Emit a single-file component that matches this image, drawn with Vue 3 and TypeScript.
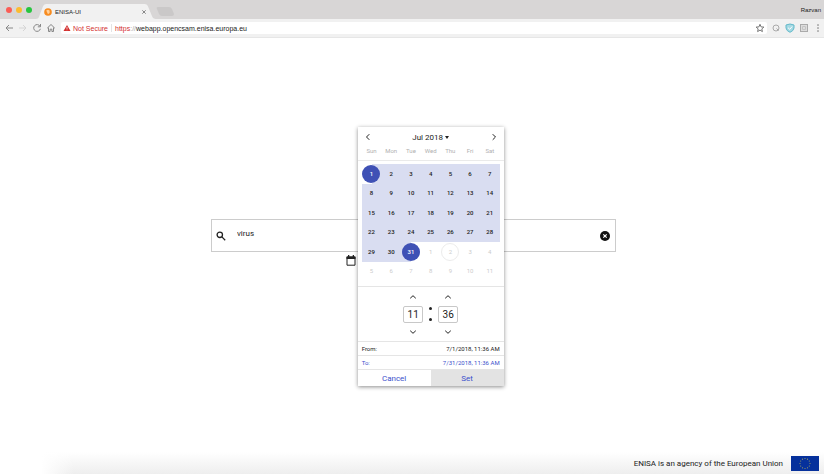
<script setup lang="ts">
import { computed, ref } from 'vue'

interface Day {
  key: number
  label: number
  kind: string[]
}

const query = ref('virus')
const hour = ref('11')
const minute = ref('36')
const weekdays = ['Sun', 'Mon', 'Tue', 'Wed', 'Thu', 'Fri', 'Sat']

const days = computed<Day[]>(() =>
  Array.from({ length: 42 }, (_, i) => {
    const inMonth = i < 31
    const kind: string[] = []
    if (inMonth) kind.push('in-range')
    else kind.push('outside')
    if (i === 0) kind.push('edge', 'start')
    if (i === 30) kind.push('edge', 'end')
    if (i === 32) kind.push('today')
    return { key: i, label: inMonth ? i + 1 : i - 30, kind }
  }),
)

const stars = Array.from({ length: 12 }, (_, i) => ({
  x: 14 + 5 * Math.sin((i * Math.PI) / 6),
  y: 7.5 - 5 * Math.cos((i * Math.PI) / 6),
}))
</script>

<template>
  <div class="window">
    <header class="chrome">
      <div class="tabs">
        <div class="lights"><i class="red"></i><i class="yellow"></i><i class="green"></i></div>
        <div class="tab">
          <svg class="tab-shape" viewBox="0 0 118 15" preserveAspectRatio="none" aria-hidden="true">
            <path d="M0 15C3 15 3 12 4 10L7 2Q8 0 10 0H107Q109 0 110 2L114 12Q115 15 118 15Z" />
          </svg>
          <svg class="favicon" viewBox="0 0 8 8" aria-hidden="true">
            <circle cx="4" cy="4" r="3.8" fill="#f78b1f" />
            <path d="M2.2 2.5 4 1.7 5.6 2.6V5L4 6.2Z" fill="#ffd09a" />
          </svg>
          <span class="tab-title">ENISA-UI</span>
          <button class="tab-close" type="button" aria-label="Close tab">
            <svg viewBox="0 0 6 6"><path d="M1.3 1.3l3.4 3.4M4.7 1.3L1.3 4.7" /></svg>
          </button>
        </div>
        <button class="new-tab" type="button" aria-label="New tab">
          <svg viewBox="0 0 19 9"><path d="M2 0H13Q15 0 16 2L18 7Q18 9 16 9H6Q4 9 3 7L1 2Q0 0 2 0Z" /></svg>
        </button>
        <span class="profile">Razvan</span>
      </div>
      <div class="toolbar">
        <button type="button" aria-label="Back">
          <svg viewBox="0 0 10 10"><path d="M9 5H2M5 2L2 5L5 8" /></svg>
        </button>
        <button type="button" aria-label="Forward" disabled>
          <svg viewBox="0 0 10 10"><path d="M1 5H8M5 2L8 5L5 8" /></svg>
        </button>
        <button type="button" aria-label="Reload">
          <svg viewBox="0 0 10 10"><path d="M8 3.2A3.4 3.4 0 1 0 8.4 5.8M8.5 1V3.8H5.8" /></svg>
        </button>
        <button type="button" aria-label="Home">
          <svg viewBox="0 0 10 10"><path d="M1.2 5.2L5 1.5L8.8 5.2M2.5 4.5V8.5H4.1V6.2H5.9V8.5H7.5V4.5" /></svg>
        </button>
        <div class="address">
          <svg class="warning" viewBox="0 0 8 8" aria-hidden="true">
            <path d="M4 1L7.5 7H.5Z" fill="#d3302f" /><path d="M4 3V5M4 5.5V6.2" stroke="#fff" stroke-width=".7" />
          </svg>
          <span class="insecure">Not Secure</span>
          <span class="divider"></span>
          <span class="url"><span class="scheme">https</span><span class="slashes">://</span>webapp.opencsam.enisa.europa.eu</span>
          <button class="star" type="button" aria-label="Bookmark">
            <svg viewBox="0 0 10 10"><path d="M5 1.3L6.1 3.9L8.9 4.1L6.8 5.9L7.4 8.6L5 7.1L2.6 8.6L3.2 5.9L1.1 4.1L3.9 3.9Z" /></svg>
          </button>
        </div>
        <div class="extensions">
          <button type="button" aria-label="Extension">
            <svg viewBox="0 0 10 10"><circle cx="5" cy="5" r="3" /><path d="M5.5 5.5L7.5 7.5" /></svg>
          </button>
          <button type="button" aria-label="Shield">
            <svg viewBox="0 0 10 10"><path d="M5 1L9 2V5Q8.5 8 5 9.3Q1.5 8 1 5V2Z" fill="#a5d9e3" stroke="#62b9ca" /><path d="M3 4.7L4.7 6.3L7.2 3.5" stroke="#fff" /></svg>
          </button>
          <button type="button" aria-label="Reader">
            <svg viewBox="0 0 10 10"><rect x="1.5" y="1.5" width="7" height="7" fill="#ddd" /><path d="M3.5 3.5H6.5V6.5H3.5Z" stroke="#c4c4c4" /></svg>
          </button>
          <button class="more" type="button" aria-label="Menu">
            <svg viewBox="0 0 10 10"><circle cx="5" cy="2" r=".5" /><circle cx="5" cy="5" r=".5" /><circle cx="5" cy="8" r=".5" /></svg>
          </button>
        </div>
      </div>
    </header>

    <main>
      <form class="search" @submit.prevent>
        <button type="submit" aria-label="Search">
          <svg viewBox="0 0 10 10"><circle cx="3.8" cy="3.8" r="2.7" /><path d="M5.9 5.9L9.2 9.2" /></svg>
        </button>
        <input v-model="query" type="text" aria-label="Search text" />
        <button type="button" aria-label="Clear" @click="query = ''">
          <svg viewBox="0 0 10 10"><circle cx="5" cy="5" r="5" fill="#111" stroke="none" /><path class="clear-cross" d="M3.3 3.3L6.7 6.7M6.7 3.3L3.3 6.7" /></svg>
        </button>
      </form>
      <div class="filters">
        <div class="anchor">
          <button class="calendar-button" type="button" aria-label="Pick dates">
            <svg viewBox="0 0 10 11"><path d="M1 2H9V10.2H1Z" fill="none" stroke="#222" /><path d="M.5 1.5H9.5V4H.5ZM2 0H3.3V2H2ZM6.7 0H8V2H6.7Z" fill="#222" /></svg>
          </button>
          <section class="picker" aria-label="Date range">
            <div class="month">
              <button type="button" aria-label="Previous month"><svg viewBox="0 0 8 8"><path d="M5.3 1.2L2.5 4L5.3 6.8" /></svg></button>
              <button class="month-name" type="button">Jul 2018<i class="caret"></i></button>
              <button type="button" aria-label="Next month"><svg viewBox="0 0 8 8"><path d="M2.7 1.2L5.5 4L2.7 6.8" /></svg></button>
            </div>
            <div class="weekdays"><span v-for="d in weekdays" :key="d">{{ d }}</span></div>
            <div class="days">
              <button v-for="d in days" :key="d.key" type="button" class="day" :class="d.kind"><span>{{ d.label }}</span></button>
            </div>
            <div class="time">
              <div class="unit">
                <button type="button" aria-label="Later hour"><svg viewBox="0 0 8 8"><path d="M1.2 5.3L4 2.7L6.8 5.3" /></svg></button>
                <input v-model="hour" type="text" aria-label="Hour" />
                <button type="button" aria-label="Earlier hour"><svg viewBox="0 0 8 8"><path d="M1.2 2.7L4 5.3L6.8 2.7" /></svg></button>
              </div>
              <div class="colon"><i></i><i></i></div>
              <div class="unit">
                <button type="button" aria-label="Later minute"><svg viewBox="0 0 8 8"><path d="M1.2 5.3L4 2.7L6.8 5.3" /></svg></button>
                <input v-model="minute" type="text" aria-label="Minute" />
                <button type="button" aria-label="Earlier minute"><svg viewBox="0 0 8 8"><path d="M1.2 2.7L4 5.3L6.8 2.7" /></svg></button>
              </div>
            </div>
            <div class="bound"><span>From:</span><span>7/1/2018, 11:36 AM</span></div>
            <div class="bound active"><span>To:</span><span>7/31/2018, 11:36 AM</span></div>
            <div class="actions"><button type="button">Cancel</button><button class="set" type="button">Set</button></div>
          </section>
        </div>
      </div>
    </main>

    <footer>
      <span>ENISA is an agency of the European Union</span>
      <svg class="flag" viewBox="0 0 28 15" role="img" aria-label="European Union flag">
        <rect width="28" height="15" fill="#06319c" />
        <circle v-for="(s, i) in stars" :key="i" :cx="s.x" :cy="s.y" r=".6" fill="#9d9f62" />
      </svg>
    </footer>
  </div>
</template>

<style>
body {
  background: #fff;
}
</style>

<style scoped>
* {
  box-sizing: border-box;
}
.window {
  min-height: 100vh;
  display: flex;
  flex-direction: column;
  font-family: Roboto, "Liberation Sans", sans-serif;
  color: #222;
}
button {
  padding: 0;
  border: 0;
  background: none;
  color: inherit;
  font: inherit;
  display: flex;
  align-items: center;
  justify-content: center;
}
input {
  min-width: 0;
  padding: 0;
  border: 0;
  outline: 0;
  background: none;
  color: inherit;
  font: inherit;
}
svg {
  display: block;
  flex: none;
  fill: none;
  stroke: currentColor;
}
.chrome {
  font-family: "Liberation Sans", sans-serif;
  font-size: 6px;
  background: #f1f1f1;
  border-bottom: 1px solid #e6e6e6;
}
.tabs {
  height: 19px;
  display: flex;
  align-items: flex-end;
  padding: 0 3px 0 6px;
  background: #d8d6d6;
}
.lights {
  display: flex;
  gap: 4px;
  align-self: center;
  margin-right: 4px;
}
.lights i {
  width: 6px;
  height: 6px;
  border-radius: 50%;
}
.red {
  background: #fb5c55;
}
.yellow {
  background: #fcbb2f;
}
.green {
  background: #27c53f;
}
.tab {
  position: relative;
  width: 120px;
  height: 15px;
  display: flex;
  align-items: center;
  gap: 3px;
  padding: 0 9px 0 8px;
}
.tab-shape {
  position: absolute;
  inset: 0;
  width: 100%;
  height: 100%;
  fill: #f1f1f1;
  stroke: none;
}
.favicon,
.tab-title,
.tab-close {
  position: relative;
}
.favicon {
  width: 8px;
  height: 8px;
  stroke: none;
}
.tab-title {
  flex: 1;
}
.tab-close svg {
  width: 6px;
  height: 6px;
  stroke: #888;
}
.new-tab {
  align-self: center;
  padding-top: 4px;
}
.new-tab svg {
  width: 19px;
  height: 9px;
  fill: #cac8c8;
  stroke: none;
}
.profile {
  margin-left: auto;
  align-self: center;
}
.toolbar {
  height: 18px;
  display: flex;
  align-items: center;
  gap: 4px;
  padding: 0 1px 0 4px;
  color: #888;
}
.toolbar button svg {
  width: 10px;
  height: 10px;
}
.toolbar button:disabled {
  color: #d5d5d5;
}
.address {
  flex: 1;
  height: 12px;
  display: flex;
  align-items: center;
  gap: 2px;
  padding: 0 2px;
  margin-left: 1px;
  border-radius: 2px;
  background: #fff;
  font-size: 7px;
  color: #222;
}
.warning {
  width: 8px;
  height: 8px;
  stroke: none;
}
.insecure,
.scheme {
  color: #d3302f;
}
.divider {
  width: 1px;
  height: 8px;
  margin: 0 1px;
  background: #e3e3e3;
}
.slashes {
  color: #aaa;
}
.star {
  margin-left: auto;
  color: #777;
}
.extensions {
  display: flex;
  gap: 4px;
  color: #aaa;
}
.more svg {
  fill: #777;
  stroke: #777;
  stroke-width: 0.5;
}
main {
  flex: 1;
  padding: 181px 25.2% 0 25.6%;
}
.search {
  height: 33px;
  display: flex;
  align-items: center;
  gap: 11px;
  padding: 0 5px 0 4px;
  border: 1px solid #ccc;
}
.search svg {
  width: 10px;
  height: 10px;
  stroke-width: 1.3;
}
.search .clear-cross {
  stroke: #fff;
  stroke-width: 1.2;
}
.search input {
  flex: 1;
  height: 20px;
  padding-bottom: 4px;
  font-size: 8px;
}
.filters {
  display: flex;
  justify-content: center;
  padding-top: 3px;
}
.anchor {
  position: relative;
  margin-right: 126px;
}
.calendar-button svg {
  width: 10px;
  height: 11px;
  stroke: none;
}
.picker {
  position: absolute;
  left: 12px;
  top: -128px;
  width: 146px;
  background: #fff;
  box-shadow: 0 1px 4px rgba(0, 0, 0, 0.45);
  font-size: 6px;
}
.month {
  height: 20px;
  display: flex;
  align-items: center;
  justify-content: space-between;
  padding: 0 6px;
}
.picker svg {
  width: 8px;
  height: 8px;
}
.month-name {
  font-size: 8px;
}
.caret {
  margin-left: 2px;
  border: 2px solid transparent;
  border-top: 3px solid #222;
  border-bottom: 0;
}
.weekdays {
  height: 14px;
  display: grid;
  grid-template-columns: repeat(7, 1fr);
  padding: 0 4px;
  border-bottom: 1px solid #eaeaea;
  line-height: 8px;
  text-align: center;
  color: #b0b0b0;
}
.days {
  height: 126px;
  display: grid;
  grid-template-columns: repeat(7, 1fr);
  grid-template-rows: repeat(6, 1fr);
  padding: 3px 4px 5px;
  border-bottom: 1px solid #e5e5e5;
}
.day span {
  width: 18px;
  height: 18px;
  border-radius: 50%;
  line-height: 18px;
}
.in-range {
  background: #d9ddf1;
  font-weight: 500;
}
.start {
  background: linear-gradient(90deg, transparent 50%, #d9ddf1 50%);
}
.end {
  background: linear-gradient(90deg, #d9ddf1 50%, transparent 50%);
}
.edge span {
  background: #3f51b5;
  color: #fff;
}
.outside {
  color: #ccc;
}
.today span {
  border: 1px solid #ececec;
  line-height: 16px;
}
.time {
  height: 54px;
  display: flex;
  align-items: center;
  justify-content: center;
  gap: 6px;
}
.unit {
  display: flex;
  flex-direction: column;
  align-items: center;
  gap: 5px;
}
.unit input {
  width: 20px;
  height: 17px;
  border: 1px solid #c8c8c8;
  border-radius: 2px;
  text-align: center;
  font-size: 10px;
}
.colon {
  display: flex;
  flex-direction: column;
  gap: 8px;
}
.colon i {
  width: 3px;
  height: 3px;
  border-radius: 50%;
  background: #222;
}
.bound {
  height: 14px;
  display: flex;
  align-items: center;
  justify-content: space-between;
  padding: 0 4px;
  border-top: 1px solid #e5e5e5;
}
.active {
  color: #3b50cc;
}
.actions {
  display: grid;
  grid-template-columns: 1fr 1fr;
  border-top: 1px solid #e5e5e5;
  font-size: 8px;
  color: #3b50cc;
}
.actions button {
  height: 16px;
}
.actions .set {
  background: #e3e3e3;
}
footer {
  display: flex;
  align-items: center;
  justify-content: flex-end;
  gap: 8px;
  height: 22px;
  padding: 2px 5px 2px;
  background: linear-gradient(90deg, #fff 5%, transparent 9%), linear-gradient(#fff, #eee);
  font-size: 8px;
}
.flag {
  width: 28px;
  height: 15px;
  stroke: none;
}
</style>
